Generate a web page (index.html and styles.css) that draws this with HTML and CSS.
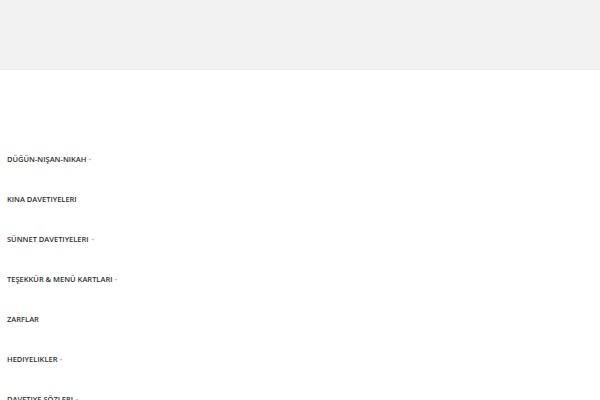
FILE: index.html
```html
<!DOCTYPE html>
<html lang="tr">
<head>
<meta charset="utf-8">
<link rel="stylesheet" href="styles.css">
</head>
<body>
<header class="topbar"></header>
<nav class="menu">
  <a class="item" href="#">DÜĞÜN-NIŞAN-NIKAH<svg class="chev" viewBox="0 0 6 4"><path d="M0.8 0.8 L3 3 L5.2 0.8" /></svg></a>
  <a class="item" href="#">KINA DAVETIYELERI</a>
  <a class="item" href="#">SÜNNET DAVETIYELERI<svg class="chev" viewBox="0 0 6 4"><path d="M0.8 0.8 L3 3 L5.2 0.8" /></svg></a>
  <a class="item" href="#">TEŞEKKÜR &amp; MENÜ KARTLARI<svg class="chev" viewBox="0 0 6 4"><path d="M0.8 0.8 L3 3 L5.2 0.8" /></svg></a>
  <a class="item" href="#">ZARFLAR</a>
  <a class="item" href="#">HEDIYELIKLER<svg class="chev" viewBox="0 0 6 4"><path d="M0.8 0.8 L3 3 L5.2 0.8" /></svg></a>
  <a class="item" href="#">DAVETIYE SÖZLERI<svg class="chev" viewBox="0 0 6 4"><path d="M0.8 0.8 L3 3 L5.2 0.8" /></svg></a>
</nav>
</body>
</html>
```
FILE: styles.css
```css
html, body {
  margin: 0;
  padding: 0;
  background: #ffffff;
  font-family: "Open Sans", "Liberation Sans", sans-serif;
}
.topbar {
  height: 69px;
  background: #f2f2f2;
  border-bottom: 1px solid #ececec;
}
.menu {
  display: flex;
  flex-direction: column;
  padding-top: 69px;
}
.item {
  height: 40px;
  display: flex;
  align-items: center;
  gap: 2px;
  padding-left: 7px;
  font-size: 7.5px;
  font-weight: 600;
  color: #2e2e2e;
  text-decoration: none;
  white-space: pre;
}
.chev {
  width: 4px;
  height: 3px;
  margin-top: 1px;
  fill: none;
  stroke: #888888;
  stroke-width: 0.9;
}
```
